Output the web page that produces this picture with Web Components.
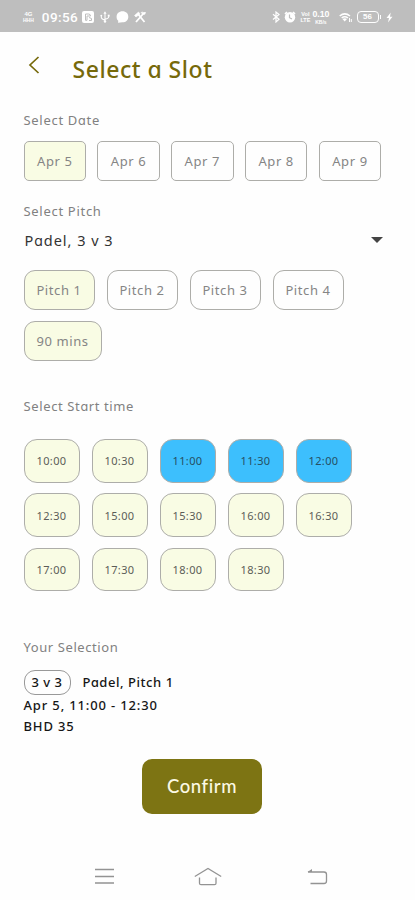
<!DOCTYPE html>
<html lang="en"><head><meta charset="utf-8"><title>Select a Slot</title>
<style>
html,body{margin:0;height:900px;overflow:hidden;background:#fefefe;font-family:"Noto Sans","Open Sans",sans-serif}
</style></head><body>
<booking-screen></booking-screen>
<script>
const define=(name,html)=>customElements.define(name,class extends HTMLElement{
  constructor(){super();this.attachShadow({mode:'open'}).innerHTML=html;}
});

define('status-bar',`<style>
:host{display:flex;align-items:center;box-sizing:border-box;height:32px;background:#bebebe;color:#fff;padding:2px 22px 0 23px}
.l,.r{display:flex;align-items:center}
.r{margin-left:auto}
.s{display:flex;flex-direction:column;font:bold 6px/6px "Liberation Sans",sans-serif;align-items:center}
.s span{display:block}
.t{font:500 13.5px/16px Roboto,sans-serif;letter-spacing:.4px;margin:0 4px 0 8px}
.b{font:bold 8px/9.5px "Liberation Sans",sans-serif;border:1.3px solid #fff;border-radius:4px;width:20px;height:9.5px;text-align:center}
svg{display:block}
</style>
<div class="l"><span class="s"><span>4G</span><span style="font-size:5px">HHH</span></span><span class="t">09:56</span>
<svg width="12" height="12" viewBox="0 0 12 12"><rect width="12" height="12" rx="2" fill="#fff"/><path d="M3.5 9.3V3h3q2 0 2 2H5v4.3zM7 6.5l2.5 1v2H7" fill="none" stroke="#bebebe"/></svg>
<svg style="margin-left:6px" width="10" height="12" viewBox="0 0 10 13"><path d="M5 12V2M1 5v2q0 1.500 4 3M9 5v1.500Q9 8 5 9" fill="none" stroke="#fff" stroke-width="1.100"/><path d="M3.300 3 5 .4 6.700 3z" fill="#fff"/><circle cx="5" cy="11.400" r="1.300" fill="#fff"/><circle cx="1" cy="5" r="1" fill="#fff"/><path d="M8 4h2v2H8z" fill="#fff"/></svg>
<svg style="margin-left:6px" width="13" height="12" viewBox="0 0 13 12"><path d="M6.500.300C10 .300 12.300 2.600 12.300 5.700S10 11.300 6.500 11.300L2 11.700 2.300 9.700C1 8.700.600 7.300.600 5.700.600 2.600 3 .300 6.500.300z" fill="#fff"/></svg>
<svg style="margin-left:5px" width="12" height="12" viewBox="0 0 12 12"><path d="M2 11 9 3M4 3l6.500 8" fill="none" stroke="#fff" stroke-width="1.800"/><path d="M.500 4.500 4.500 1 6 3 2 6zM7 1.500l2 2 2-.3L11.500 1M7 1.500 9 1" fill="#fff" stroke="#fff" stroke-width=".6"/></svg></div>
<div class="r">
<svg width="8" height="12" viewBox="0 0 8 12"><path d="m1 3.300 6 5L4 11V1l3 2.500-6 5" fill="none" stroke="#fff" stroke-width="1.200"/></svg>
<svg style="margin-left:4px" width="12" height="12" viewBox="0 0 12 12"><circle cx="6" cy="6.300" r="5.200" fill="#fff"/><path d="M1 3 3 1M9 1l2 2" stroke="#fff" stroke-width="1.700"/><path d="M5.500 3.500v3.200L8 8" fill="none" stroke="#bebebe" stroke-width="1.200"/></svg>
<span class="s" style="margin-left:4px;font-size:5.500px"><span>VoI</span><span>LTE</span></span>
<span class="s" style="margin-left:2px;font-size:8.800px"><span style="line-height:9px">0.10</span><span style="font-size:5px;line-height:6px">KB/s</span></span>
<svg style="margin-left:9px" width="13" height="11" viewBox="0 0 13 11"><path d="M.700 4Q5.700-.300 11 4M2.700 6Q5.700 3.500 9 6" fill="none" stroke="#fff" stroke-width="1.500"/><path d="M3.500 7 5.700 9.500 8 7Q5.700 5.500 3.500 7z" fill="#fff"/><path d="M10.500 6v4M12.300 7v3" stroke="#fff"/></svg>
<span class="b" style="margin-left:5px">56</span><span style="width:1.500px;height:4px;background:#fff;margin-left:1px"></span>
<svg style="margin-left:5px" width="7" height="11" viewBox="0 0 7 11"><path d="M4.700.500.500 6H3L2 10.500 6.500 4.700H4z" fill="#fff"/></svg>
</div>`);

define('screen-header',`<style>
:host{display:flex;align-items:center;height:73px;padding-left:28px;color:#76690a;box-sizing:border-box}
h1{font-size:23px;line-height:28px;font-weight:500;letter-spacing:.55px;margin:0 0 0 32.5px}
svg{margin-bottom:7px}
</style><svg width="12" height="18" viewBox="0 0 12 18"><path d="M10.500 1 2 9l8.500 8" fill="none" stroke="currentColor" stroke-width="1.700"/></svg><h1><slot></slot></h1>`);

define('section-label',`<style>
:host{display:block;font-size:13px;line-height:18px;color:#818181;letter-spacing:.7px;white-space:nowrap}
</style><slot></slot>`);

define('choice-chip',`<style>
:host{display:flex;align-items:center;justify-content:center;box-sizing:border-box;flex:none;width:var(--w,62.5px);height:var(--h,40px);border:1px solid #adada9;border-radius:var(--r,5px);font-size:var(--fs,13px);letter-spacing:var(--ls,.6px);color:var(--c,#858585);white-space:nowrap}
:host([selected]){background:#f9fce4}
:host([booked]){background:#3dbffd;color:#264f63}
</style><slot></slot>`);

define('chip-row',`<style>
:host{display:flex;flex-wrap:wrap;gap:var(--gap,11.3px)}
</style><slot></slot>`);

define('pitch-select',`<style>
:host{display:flex;align-items:center;justify-content:space-between;height:22px;font-size:14.5px;letter-spacing:.97px;color:#333;padding:0 32px 0 1px}
i{border:6px solid transparent;border-top-color:#444;border-bottom:0}
</style><span><slot></slot></span><i></i>`);

define('booking-summary',`<style>
:host{display:block;font-size:13px;line-height:21px;letter-spacing:.55px;font-weight:500;color:#161616}
.a{display:flex;align-items:center;gap:12px;height:25px}
.p{box-sizing:border-box;width:47px;height:25px;border:1px solid #999;border-radius:11px;display:flex;align-items:center;justify-content:center}
.d,.m{letter-spacing:.85px}
</style><div class="a"><span class="p"><slot name="format"></slot></span><span class="v"><slot name="venue"></slot></span></div>
<div class="d"><slot name="when"></slot></div><div class="m"><slot name="price"></slot></div>`);

define('confirm-button',`<style>
:host{display:block}
button{display:block;margin:0 auto;width:120px;height:55px;border:0;border-radius:10px;background:#7d7413;color:#fbf9e4;font:500 18.5px/26px Lato,sans-serif;letter-spacing:.6px;padding:0}
</style><button><slot></slot></button>`);

define('system-nav',`<style>
:host{display:flex;justify-content:space-between;align-items:center;padding:0 87px 0 95px;height:24px}
svg{fill:none;stroke:#939393;stroke-width:1.3}
.h{margin-right:5px}
</style>
<svg width="19" height="17" viewBox="0 0 19 17"><path d="M0 1.500h19M0 8.500h19M0 15h19"/></svg>
<svg class="h" width="28" height="20" viewBox="0 0 28 20"><path d="M.800 9.500 14 1.500l13.200 8M5.500 10.500v5.700q0 1.500 1.500 1.500h13.500q1.500 0 1.500-1.500v-5.700"/></svg>
<svg width="21" height="18" viewBox="0 0 21 18"><path d="M1 4h16q2.500 0 2.500 2.500v6.500q0 2.500-2.500 2.500H3.500"/><path d="M.500 4 5 1v3z" fill="#939393" stroke="none"/></svg>`);

define('booking-screen',`<style>
:host{display:flex;flex-direction:column;height:900px}
main{padding:0 0 0 23.5px}
/* single-storey form of the letter a */
b{font-weight:inherit;font-family:Inter,sans-serif;font-feature-settings:"cv11";font-size:.97em;line-height:0}
.date{margin-top:12px}
.pitch-l{margin-top:21px}
.select{margin-top:9px}
.pitch{margin-top:19px;--w:71px;--r:11px;--gap:12px}
.dur{margin-top:11px;--w:78px;--r:11px}
.time-l{margin-top:36px}
.times{margin-top:24px;width:340px;--w:56px;--h:43.5px;--r:13px;--gap:10.8px 12px;--fs:11px;--ls:.4px;--c:#5c5c58}
.sel-l{margin-top:47px}
.sum{margin-top:13.5px}
.ok{margin-top:22px;margin-right:11px}
.nav{margin-top:51px}
</style>
<status-bar></status-bar>
<screen-header>Select <b>a</b> Slot</screen-header>
<main>
<section-label style="margin-top:6px">Select D<b>a</b>te</section-label>
<chip-row class="date"><choice-chip selected>Apr 5</choice-chip><choice-chip>Apr 6</choice-chip><choice-chip>Apr 7</choice-chip><choice-chip>Apr 8</choice-chip><choice-chip>Apr 9</choice-chip></chip-row>
<section-label class="pitch-l">Select Pitch</section-label>
<pitch-select class="select">P<b>a</b>del, 3 v 3</pitch-select>
<chip-row class="pitch"><choice-chip selected>Pitch 1</choice-chip><choice-chip>Pitch 2</choice-chip><choice-chip>Pitch 3</choice-chip><choice-chip>Pitch 4</choice-chip></chip-row>
<chip-row class="dur"><choice-chip selected>90 mins</choice-chip></chip-row>
<section-label class="time-l" style="letter-spacing:.62px">Select St<b>a</b>rt time</section-label>
<chip-row class="times">${['10:00','10:30','11:00','11:30','12:00','12:30','15:00','15:30','16:00','16:30','17:00','17:30','18:00','18:30'].map((t,i)=>`<choice-chip ${i>1&&i<5?'booked':'selected'}>${t}</choice-chip>`).join('')}</chip-row>
<section-label class="sel-l" style="letter-spacing:.58px">Your Selection</section-label>
<booking-summary class="sum"><span slot="format">3 v 3</span><span slot="venue">P<b>a</b>del, Pitch 1</span><span slot="when">Apr 5, 11:00 - 12:30</span><span slot="price">BHD 35</span></booking-summary>
</main>
<confirm-button class="ok">Confirm</confirm-button>
<system-nav class="nav"></system-nav>`);
</script></body></html>
